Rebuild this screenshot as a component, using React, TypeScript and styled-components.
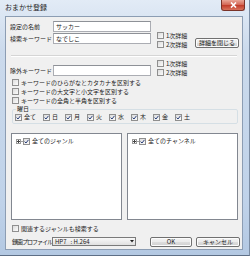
import React from 'react';
import styled, {createGlobalStyle} from 'styled-components';

const GlobalStyle = createGlobalStyle`
  html, body {
    margin: 0;
    padding: 0;
  }
  body {
    width: 250px;
    height: 256px;
    overflow: hidden;
    background: #ffffff;
    font-family: "Noto Sans CJK JP", "Noto Sans", sans-serif;
    color: #1a1a1a;
  }
`;

// window frame
const Window = styled.div`
  width: 250px;
  height: 256px;
  box-sizing: border-box;
  display: flex;
  flex-direction: column;
  background: linear-gradient(#e2ebf6, #cbdaec 20%, #bfd2e9 80%, #b3c8e2);
  border-right: 1px solid #7b8ca3;
  border-bottom: 1px solid #5d6e85;
  padding: 0 6px 5px 5px;
`;

const TitleBar = styled.div`
  height: 16px;
  display: flex;
  align-items: flex-start;
  justify-content: space-between;
`;

const Title = styled.span`
  font-size: 7px;
  line-height: 8px;
  padding: 3px 0 0 0;
  color: #1e1e1e;
`;

const CloseButton = styled.div`
  width: 24px;
  height: 11px;
  margin-right: -2px;
  box-sizing: border-box;
  background: linear-gradient(#e9a697, #d46a58 45%, #c23e2c 55%, #d9735c);
  border: 1px solid #7a3328;
  border-top: none;
  border-radius: 0 0 3px 3px;
  display: flex;
  align-items: center;
  justify-content: center;
`;

const Content = styled.div`
  flex: 1;
  background: #f0f0f0;
  border: 1px solid #8c9db3;
  padding: 4px 2px 0 4px;
  display: flex;
  flex-direction: column;
  font-size: 6px;
  line-height: 8px;
`;

const Section = styled.div`
  display: flex;
  align-items: flex-start;
`;

const FieldColumn = styled.div<{ $pad?: number }>`
  display: flex;
  flex-direction: column;
  gap: 1px;
  padding-top: ${p => p.$pad ?? 0}px;
`;

const FieldRow = styled.div`
  display: flex;
  align-items: center;
  height: 11px;
`;

const Label = styled.span<{ $w?: number; $tight?: boolean }>`
  width: ${p => p.$w ?? 43}px;
  white-space: nowrap;
  flex-shrink: 0;
  letter-spacing: ${p => p.$tight ? '-1px' : '0'};
`;

const TextBox = styled.div<{ $w?: number }>`
  width: ${p => p.$w ?? 98}px;
  height: 11px;
  box-sizing: border-box;
  background: #ffffff;
  border: 1px solid #abadb3;
  border-top-color: #8e9197;
  padding: 0 2px;
  line-height: 9px;
  white-space: nowrap;
`;

const CheckColumn = styled.div<{ $pad?: number }>`
  display: flex;
  flex-direction: column;
  margin-left: 6px;
  width: 38px;
  padding-top: ${p => p.$pad ?? 0}px;
`;

const CheckRow = styled.label<{ $h?: number }>`
  display: flex;
  align-items: center;
  gap: 2px;
  height: ${p => p.$h ?? 9}px;
  white-space: nowrap;
`;

const Box = styled.span<{ $size?: number }>`
  width: ${p => p.$size ?? 5}px;
  height: ${p => p.$size ?? 5}px;
  flex-shrink: 0;
  background: linear-gradient(135deg, #dcdcdc, #fbfbfb);
  border: 1px solid #8f8f8f;
  display: flex;
  align-items: center;
  justify-content: center;
`;

const Button = styled.div<{ $w?: number }>`
  width: ${p => p.$w ?? 44}px;
  height: 10px;
  box-sizing: border-box;
  border: 1px solid #707070;
  border-radius: 2px;
  background: linear-gradient(#f3f3f3, #ebebeb 48%, #dddddd 52%, #cfcfcf);
  box-shadow: inset 0 0 0 1px #fcfcfc;
  display: flex;
  align-items: center;
  justify-content: center;
  white-space: nowrap;
  font-size: 6px;
`;

const Separator = styled.div`
  height: 0;
  margin: 6px 3px 2px 1px;
  border-top: 1px solid #d5d5d5;
  border-bottom: 1px solid #ffffff;
`;

const OptionList = styled.div`
  display: flex;
  flex-direction: column;
  margin-left: 2px;
  margin-top: 1px;
`;

const DayGroup = styled.fieldset`
  margin: 0 2px 0 2px;
  padding: 0 2px 2px 2px;
  border: 1px solid #d5dfe5;
  border-radius: 2px;
  display: flex;
  gap: 0;
`;

const Legend = styled.legend`
  padding: 0 1px;
  margin-left: 1px;
  font-size: 6px;
  line-height: 8px;
`;

const Day = styled(CheckRow)<{ $wide?: boolean }>`
  width: ${p => p.$wide ? 28 : 22}px;
  gap: 2px;
`;

const Panels = styled.div`
  display: flex;
  gap: 5px;
  margin: 9px 2px 0 1px;
  flex: 1;
  min-height: 0;
`;

const TreePanel = styled.div`
  flex: 1;
  background: #ffffff;
  border: 1px solid #828790;
  padding: 3px 4px;
`;

const TreeItem = styled.div`
  display: flex;
  align-items: center;
  height: 8px;
  white-space: nowrap;
`;

const TreeText = styled.span`
  margin-left: 2px;
`;

const Expander = styled.span`
  width: 5px;
  height: 5px;
  box-sizing: border-box;
  border: 1px solid #9a9a9a;
  background: #ffffff;
  display: flex;
  align-items: center;
  justify-content: center;
`;

const DotLine = styled.span`
  width: 2px;
  border-top: 1px dotted #a0a0a0;
`;

const Footer = styled.div`
  display: flex;
  flex-direction: column;
  padding: 4px 0 2px 2px;
`;

const BottomRow = styled.div`
  display: flex;
  align-items: center;
  height: 11px;
  margin-top: 3px;
`;

const Dropdown = styled.div`
  width: 84px;
  height: 9px;
  box-sizing: border-box;
  border: 1px solid #7a7a7a;
  background: linear-gradient(#f8f8f8, #ececec 50%, #e0e0e0);
  display: flex;
  align-items: center;
  justify-content: space-between;
  padding: 0 0 0 2px;
  white-space: pre;
  font-size: 6px;
`;

const DropArrow = styled.span`
  width: 7px;
  display: flex;
  justify-content: center;
`;

const ButtonGroup = styled.div`
  display: flex;
  gap: 4px;
  margin-left: 14px;
`;

const Check = () => (
    <svg width="5" height="5" viewBox="0 0 5 5">
        <path d="M0.6 2.6 L2 4 L4.5 0.8" fill="none" stroke="#2a3f7a" strokeWidth="1"/>
    </svg>
);

const CheckBox: React.FC<{ checked?: boolean; size?: number }> = ({checked, size}) => (
    <Box $size={size}>{checked && <Check/>}</Box>
);

const Plus = () => (
    <Expander>
        <svg width="3" height="3" viewBox="0 0 3 3">
            <path d="M0 1.5 H3 M1.5 0 V3" stroke="#444" strokeWidth="1"/>
        </svg>
    </Expander>
);

const days = ['全て', '日', '月', '火', '水', '木', '金', '土'];

const App: React.FC = () => {
    return (
        <Window>
            <GlobalStyle/>
            <TitleBar>
                <Title>おまかせ登録</Title>
                <CloseButton>
                    <svg width="7" height="6" viewBox="0 0 7 6">
                        <path d="M1 0.5 L6 5.5 M6 0.5 L1 5.5" stroke="#ffffff" strokeWidth="1.6"/>
                    </svg>
                </CloseButton>
            </TitleBar>
            <Content>
                {/* name + keyword */}
                <Section>
                    <FieldColumn>
                        <FieldRow><Label>設定の名前</Label><TextBox>サッカー</TextBox></FieldRow>
                        <FieldRow><Label>検索キーワード</Label><TextBox>なでしこ</TextBox></FieldRow>
                    </FieldColumn>
                    <CheckColumn $pad={10}>
                        <CheckRow><CheckBox/>1次詳細</CheckRow>
                        <CheckRow><CheckBox/>2次詳細</CheckRow>
                    </CheckColumn>
                    <FieldColumn $pad={17}>
                        <Button>詳細を閉じる</Button>
                    </FieldColumn>
                </Section>
                <Separator/>
                {/* exclude keyword */}
                <Section>
                    <FieldColumn $pad={6}>
                        <FieldRow><Label>除外キーワード</Label><TextBox/></FieldRow>
                    </FieldColumn>
                    <CheckColumn>
                        <CheckRow><CheckBox/>1次詳細</CheckRow>
                        <CheckRow><CheckBox/>2次詳細</CheckRow>
                    </CheckColumn>
                </Section>
                <OptionList>
                    <CheckRow><CheckBox/>キーワードのひらがなとカタカナを区別する</CheckRow>
                    <CheckRow><CheckBox/>キーワードの大文字と小文字を区別する</CheckRow>
                    <CheckRow><CheckBox/>キーワードの全角と半角を区別する</CheckRow>
                </OptionList>
                <DayGroup>
                    <Legend>曜日</Legend>
                    {days.map((d, i) => (
                        <Day key={d} $h={8} $wide={i === 0}><CheckBox checked size={5}/>{d}</Day>
                    ))}
                </DayGroup>
                <Panels>
                    <TreePanel>
                        <TreeItem>
                            <Plus/>
                            <DotLine/>
                            <CheckBox checked/>
                            <TreeText>全てのジャンル</TreeText>
                        </TreeItem>
                    </TreePanel>
                    <TreePanel>
                        <TreeItem>
                            <Plus/>
                            <DotLine/>
                            <CheckBox checked/>
                            <TreeText>全てのチャンネル</TreeText>
                        </TreeItem>
                    </TreePanel>
                </Panels>
                <Footer>
                    <CheckRow><CheckBox/>関連するジャンルも検索する</CheckRow>
                    <BottomRow>
                        <Label $w={40} $tight>録画プロファイル</Label>
                        <Dropdown>
                            <span>HP7   : H.264</span>
                            <DropArrow>
                                <svg width="4" height="3" viewBox="0 0 4 3">
                                    <path d="M0 0 H4 L2 2.5 Z" fill="#222"/>
                                </svg>
                            </DropArrow>
                        </Dropdown>
                        <ButtonGroup>
                            <Button $w={42}>OK</Button>
                            <Button $w={44}>キャンセル</Button>
                        </ButtonGroup>
                    </BottomRow>
                </Footer>
            </Content>
        </Window>
    );
};

export default App;
